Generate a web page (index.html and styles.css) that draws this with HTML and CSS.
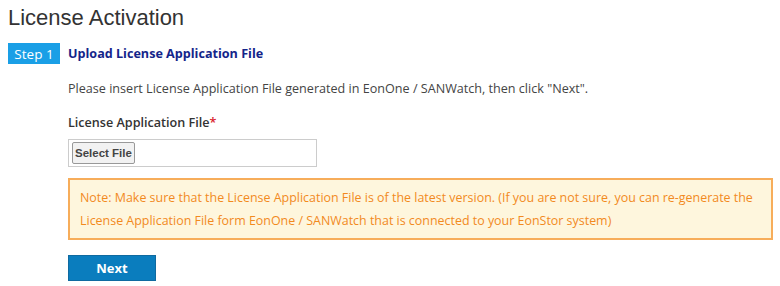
FILE: index.html
```html
<!DOCTYPE html>
<html>
<head>
<meta charset="utf-8">
<link rel="stylesheet" href="styles.css">
</head>
<body>
<div class="page">
  <h1 class="title">License Activation</h1>
  <div class="step">
    <span class="step-badge">Step 1</span>
    <span class="step-title">Upload License Application File</span>
  </div>
  <div class="content">
    <p class="intro">Please insert License Application File generated in EonOne / SANWatch, then click "Next".</p>
    <label class="field-label">License Application File<span class="req">*</span></label>
    <div class="file-input"><button class="file-btn">Select File</button></div>
    <div class="note">Note: Make sure that the License Application File is of the latest version. (If you are not sure, you can re-generate the License Application File form EonOne / SANWatch that is connected to your EonStor system)</div>
    <button class="next-btn">Next</button>
  </div>
</div>
</body>
</html>
```
FILE: styles.css
```css
html, body { margin: 0; padding: 0; background: #fff; }
.page { padding: 3px 7px 0 8px; font-family: "Open Sans", "Noto Sans", sans-serif; }
.title {
  margin: 0;
  font-family: "Liberation Sans", Arial, sans-serif;
  font-weight: normal;
  font-size: 22px;
  line-height: 29px;
  color: #333;
}
.step { display: flex; align-items: center; margin-top: 11px; height: 21px; }
.step-badge {
  display: flex; align-items: center; justify-content: center;
  width: 52px; height: 21px;
  background: #1a9fe6; color: #fff;
  font-size: 13.5px;
}
.step-title { margin-left: 8px; color: #14258a; font-weight: bold; font-size: 12.6px; }
.content { padding-left: 60px; display: flex; flex-direction: column; align-items: flex-start; }
.intro { margin: 15px 0 0; font-size: 12.6px; color: #444; line-height: 20px; }
.field-label { margin-top: 14px; font-size: 12.6px; font-weight: 600; color: #333; line-height: 20px; }
.req { color: #d9202a; }
.file-input {
  margin-top: 6px;
  box-sizing: border-box;
  width: 249px; height: 28px;
  border: 1px solid #ccc;
  display: flex; align-items: center; padding-left: 3px;
}
.file-btn {
  font-family: "Liberation Sans", Arial, sans-serif;
  font-size: 11.5px; font-weight: bold; color: #444;
  height: 22px; padding: 0 2px;
  white-space: nowrap;
  background: #f2f2f2; border: 1px solid #999; border-radius: 2px;
}
.note {
  margin-top: 11px;
  align-self: stretch;
  background: #fef6dd;
  border: 2px solid #f7ad5a;
  color: #f28a1e;
  font-size: 12.45px;
  line-height: 23px;
  padding: 6px 4px 6px 10px;
}
.next-btn {
  margin-top: 15px;
  width: 88px; height: 26px;
  background: #0a7dbe;
  border: 1px solid #0f6aa0;
  color: #fff;
  font-family: "Open Sans", sans-serif;
  font-weight: bold; font-size: 13px;
}
```
